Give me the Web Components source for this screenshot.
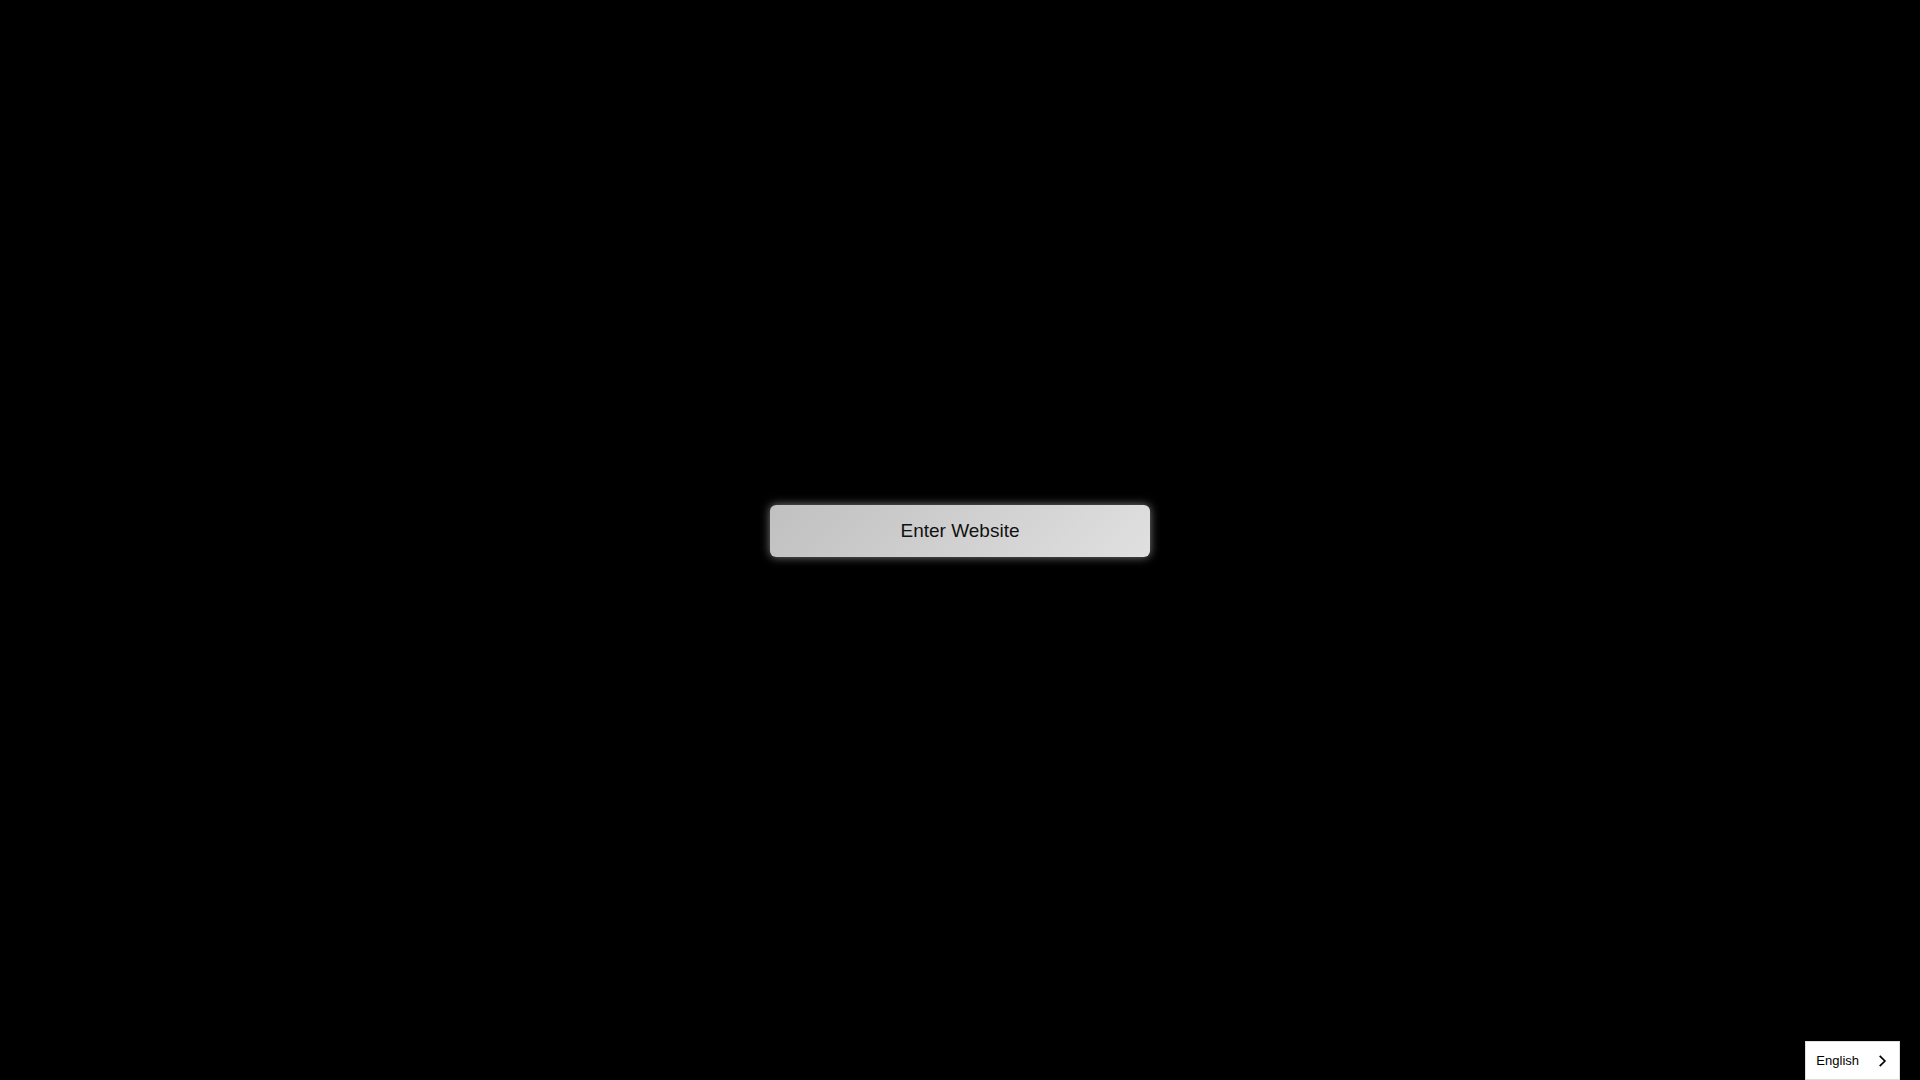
<!DOCTYPE html>
<html lang="en">
<head>
<meta charset="utf-8">
<meta name="viewport" content="width=device-width, initial-scale=1">
<title>Enter Website</title>
<style>
    body {
        margin: 0;
        background: #000;
        font-family: "Liberation Sans", Arial, sans-serif;
    }
</style>
</head>
<body>
<splash-page>
    <enter-button>Enter Website</enter-button>
    <language-switch slot="corner">English</language-switch>
</splash-page>
<script>
class SplashPage extends HTMLElement {
    constructor() {
        super();
        const template = document.createElement("template");
        template.innerHTML = `
            <style>
                :host {
                    display: block;
                }
                main {
                    display: flex;
                    align-items: center;
                    justify-content: center;
                    box-sizing: border-box;
                    min-height: 100vh;
                    padding: 0 16px 18px;
                }
                /* floats over the page, stuck to the bottom edge */
                .corner {
                    position: fixed;
                    right: 20px;
                    bottom: 0;
                }
            </style>
            <main><slot></slot></main>
            <div class="corner"><slot name="corner"></slot></div>
        `;
        const shadow = this.attachShadow({mode: "open"});
        shadow.appendChild(template.content.cloneNode(true));
    }
}

class EnterButton extends HTMLElement {
    constructor() {
        super();
        const template = document.createElement("template");
        template.innerHTML = `
            <style>
                :host {
                    display: block;
                    width: 100%;
                    max-width: 380px;
                }
                button {
                    display: block;
                    width: 100%;
                    padding: 15px 16px;
                    border: 0;
                    border-radius: 6px;
                    background: linear-gradient(135deg, #c0c0c0, #e0e0e0);
                    box-shadow: 0 0 10px rgba(255, 255, 255, 0.5);
                    color: #111;
                    font-family: inherit;
                    font-size: 19px;
                    line-height: 22px;
                    cursor: pointer;
                }
            </style>
            <button type="button"><slot></slot></button>
        `;
        const shadow = this.attachShadow({mode: "open"});
        shadow.appendChild(template.content.cloneNode(true));
    }
}

class LanguageSwitch extends HTMLElement {
    constructor() {
        super();
        const template = document.createElement("template");
        template.innerHTML = `
            <style>
                :host {
                    display: block;
                }
                button {
                    display: flex;
                    align-items: center;
                    gap: 20px;
                    padding: 11px 12px 11px 10px;
                    border: 1px solid #ddd;
                    background: #fff;
                    color: #000;
                    font-family: inherit;
                    font-size: 13px;
                    line-height: 15px;
                    cursor: pointer;
                }
                svg {
                    display: block;
                }
            </style>
            <button type="button" aria-haspopup="listbox">
                <span><slot></slot></span>
                <svg width="8" height="12" viewBox="0 0 8 12" fill="none" stroke="#000" stroke-width="1.7" aria-hidden="true">
                    <path d="M.7 .8l5.2 5.2-5.2 5.2"/>
                </svg>
            </button>
        `;
        const shadow = this.attachShadow({mode: "open"});
        shadow.appendChild(template.content.cloneNode(true));
    }
}

customElements.define("splash-page", SplashPage);
customElements.define("enter-button", EnterButton);
customElements.define("language-switch", LanguageSwitch);
</script>
</body>
</html>
